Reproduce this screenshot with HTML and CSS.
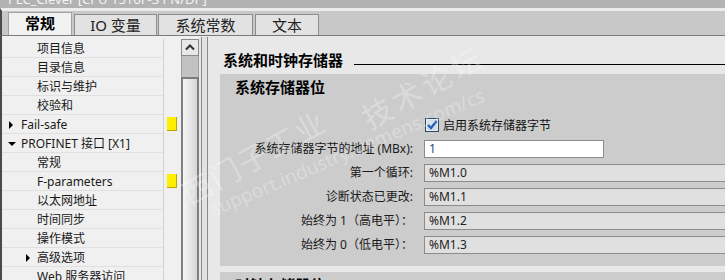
FILE: index.html
```html
<!DOCTYPE html>
<html lang="zh-CN">
<head>
  <meta charset="UTF-8">
  <title>属性</title>
  <link rel="stylesheet" href="styles.css">
</head>
<body>
  <div class="titlebar"><span>PLC_Clever [CPU 1516F-3 PN/DP]</span></div>
  <div class="tabbar">
    <div class="tab active w1">常规</div>
    <div class="tab w2">IO 变量</div>
    <div class="tab w3">系统常数</div>
    <div class="tab w4">文本</div>
  </div>
  <div class="main">
    <ul class="tree">
      <li><span class="label lv2">项目信息</span><span class="mark"></span></li>
      <li><span class="label lv2">目录信息</span><span class="mark"></span></li>
      <li><span class="label lv2">标识与维护</span><span class="mark"></span></li>
      <li><span class="label lv2">校验和</span><span class="mark"></span></li>
      <li><span class="label lv1"><i class="tri-r"></i>Fail-safe</span><span class="mark"><b class="flag"></b></span></li>
      <li><span class="label lv1"><i class="tri-d"></i>PROFINET 接口 [X1]</span><span class="mark"></span></li>
      <li><span class="label lv2">常规</span><span class="mark"></span></li>
      <li><span class="label lv2">F-parameters</span><span class="mark"><b class="flag"></b></span></li>
      <li><span class="label lv2">以太网地址</span><span class="mark"></span></li>
      <li><span class="label lv2">时间同步</span><span class="mark"></span></li>
      <li><span class="label lv2">操作模式</span><span class="mark"></span></li>
      <li><span class="label lv2 sub"><i class="tri-r"></i>高级选项</span><span class="mark"></span></li>
      <li><span class="label lv2">Web 服务器访问</span><span class="mark"></span></li>
    </ul>
    <div class="scroll">
      <div class="sb-up">
        <svg width="16" height="15" viewBox="0 0 16 15"><polyline points="4,9.5 8,5.5 12,9.5" fill="none" stroke="#333" stroke-width="2"/></svg>
      </div>
      <div class="sb-track"></div>
      <div class="sb-thumb"></div>
    </div>
    <div class="splitter"><div class="bar"></div></div>
    <div class="editor">
      <div class="heading"><span>系统和时钟存储器</span><i class="rule"></i></div>
      <div class="panel">
        <h3>系统存储器位</h3>
        <div class="form">
          <span></span>
          <label class="check">
            <svg width="14" height="14" viewBox="0 0 14 14">
              <rect x="0.5" y="0.5" width="13" height="13" fill="#e4ecf6" stroke="#34485f"/>
              <rect x="2" y="2" width="10" height="10" fill="#cfdced"/>
              <polyline points="3,7 6,10 11.5,3" fill="none" stroke="#1d5fb4" stroke-width="2.2"/>
            </svg>
            启用系统存储器字节
          </label>
        </div>
        <div class="form fields">
          <span class="lbl">系统存储器字节的地址 (MBx):</span>
          <span class="field edit">1</span>
          <span class="lbl">第一个循环:</span>
          <span class="field">%M1.0</span>
          <span class="lbl">诊断状态已更改:</span>
          <span class="field">%M1.1</span>
          <span class="lbl">始终为 1（高电平）：</span>
          <span class="field">%M1.2</span>
          <span class="lbl">始终为 0（低电平）：</span>
          <span class="field">%M1.3</span>
        </div>
      </div>
      <div class="panel">
        <h3>时钟存储器位</h3>
      </div>
    </div>
    <div class="watermark">
      <span class="wm-cn1">西门子工业</span>
      <span class="wm-cn2">技术论坛</span>
      <span class="wm-url">support.industry.siemens.com/cs</span>
    </div>
  </div>
</body>
</html>
```

FILE: styles.css
```css
*{
  margin: 0;
  padding: 0;
  box-sizing: border-box;
}
body{
  width: 725px;
  height: 280px;
  overflow: hidden;
  background: #e8e8e8;
  font-family: "Noto Sans", "Noto Sans CJK SC", sans-serif;
  font-size: 12px;
  color: #1a1a1a;
}
.titlebar{
  height: 8px;
  background: #b2b2b2;
  overflow: hidden;
  padding-left: 8px;
  color: #f4f4f4;
  font-size: 13px;
  line-height: 8px;
}
.titlebar span{
  display: block;
  margin-top: -5px;
}
.tabbar{
  display: flex;
  align-items: flex-end;
  height: 28px;
  padding-left: 6px;
  background: #c8c8c8;
  border-top: 3px solid #ececec;
  border-bottom: 1px solid #7a7a7a;
  border-left: 2px solid #4a4a4a;
}
.tab{
  height: 21px;
  margin-right: 2px;
  background: #e2e2e2;
  border: 1px solid #8e8e8e;
  border-bottom: none;
  text-align: center;
  font-size: 15px;
  line-height: 20px;
  color: #222;
}
.tab.active{
  height: 23px;
  background: #f2f2f2;
  font-weight: bold;
  color: #000;
  border-color: #a4a4a4;
}
.w1{ width: 64px; }
.w2{ width: 83px; margin-right: 1px; }
.w3{ width: 95px; margin-right: 2px; }
.w4{ width: 64px; }

.main{
  position: relative;
  display: flex;
  height: 244px;
  border-left: 2px solid #4a4a4a;
  overflow: hidden;
}
.tree{
  flex: none;
  width: 179px;
  padding-top: 3px;
  list-style: none;
  background: #f0f0f0;
}
.tree li{
  display: flex;
  height: 19px;
}
.tree .label{
  position: relative;
  width: 161px;
  border-bottom: 1px solid #e0e0e0;
  line-height: 19px;
  font-size: 12px;
  white-space: nowrap;
}
.tree .lv1{ padding-left: 19px; }
.tree .lv2{ padding-left: 35px; }
.tree .mark{
  width: 18px;
  border-left: 1px solid #d2d2d2;
}
.flag{
  display: block;
  width: 10px;
  height: 14px;
  margin: 2px 0 0 3px;
  background: #ffee00;
  border-right: 1px solid #b8a800;
  border-bottom: 1px solid #b8a800;
}
.tri-r{
  position: absolute;
  left: 7px;
  top: 6px;
  border-left: 4px solid #000;
  border-top: 4px solid transparent;
  border-bottom: 4px solid transparent;
}
.sub .tri-r{ left: 24px; }
.tri-d{
  position: absolute;
  left: 6px;
  top: 8px;
  border-top: 4px solid #000;
  border-left: 4px solid transparent;
  border-right: 4px solid transparent;
}
.scroll{
  flex: none;
  display: flex;
  flex-direction: column;
  width: 18px;
  padding-top: 3px;
  background: #f0f0f0;
}
.sb-up{
  height: 17px;
  background: #e8e8e8;
  border: 1px solid #8a8a8a;
}
.sb-up svg{ display: block; }
.sb-track{
  height: 21px;
  background: #c2c2c2;
  border-left: 1px solid #a0a0a0;
  border-right: 1px solid #a0a0a0;
}
.sb-thumb{
  flex: 1;
  background: linear-gradient(to right, #f6f6f6, #d6d6d6);
  border: 2px solid #7e7e7e;
  border-bottom: none;
}
.splitter{
  flex: none;
  width: 9px;
  padding: 1px 0 0 2px;
  background: #e8e8e8;
}
.splitter .bar{
  height: 100%;
  background: #e2e2e2;
  border-left: 1px solid #8a8a8a;
  border-right: 1px solid #8a8a8a;
}
.editor{
  flex: 1;
  min-width: 0;
  padding-left: 12px;
  background: #e8e8e8;
}
.heading{
  display: flex;
  align-items: flex-end;
  padding: 14px 0 0 3px;
  font-size: 15px;
  font-weight: bold;
  line-height: 20px;
  color: #000;
}
.heading .rule{
  flex: 1;
  height: 1px;
  margin: 0 0 5px 11px;
  background: #000;
}
.panel{
  margin-top: 4px;
  padding: 4px 0 12px;
  background: #cccccc;
}
.panel + .panel{
  margin-top: 6px;
}
.panel h3{
  padding-left: 15px;
  font-size: 15px;
  line-height: 18px;
  color: #000;
}
.form{
  display: grid;
  grid-template-columns: 196px 340px;
  column-gap: 8px;
  row-gap: 6px;
  margin-top: 21px;
}
.fields{
  margin-top: 8px;
}
.check{
  display: flex;
  align-items: center;
  gap: 4px;
  height: 15px;
  padding-left: 1px;
  font-size: 12px;
  color: #111;
}
.check svg{ display: block; }
.lbl{
  text-align: right;
  padding-right: 3px;
  line-height: 18px;
  color: #1a1a1a;
  white-space: nowrap;
}
.field{
  height: 18px;
  padding-left: 4px;
  background: #e0e0e0;
  border: 1px solid #8c8c8c;
  line-height: 16px;
  color: #222;
}
.field.edit{
  width: 180px;
  background: #fff;
  color: #2a4a7a;
}
.watermark{
  position: absolute;
  inset: 0;
  pointer-events: none;
  color: rgba(255, 255, 255, 0.3);
  white-space: nowrap;
}
.watermark span{
  position: absolute;
  transform-origin: 0 100%;
  transform: rotate(-29deg);
}
.wm-cn1{
  left: 192px;
  top: 134px;
  font-size: 30px;
  letter-spacing: 2px;
}
.wm-cn2{
  left: 372px;
  top: 58px;
  font-size: 30px;
  letter-spacing: 4px;
}
.wm-url{
  left: 214px;
  top: 160px;
  font-size: 19px;
  transform: rotate(-23deg) !important;
}
```
